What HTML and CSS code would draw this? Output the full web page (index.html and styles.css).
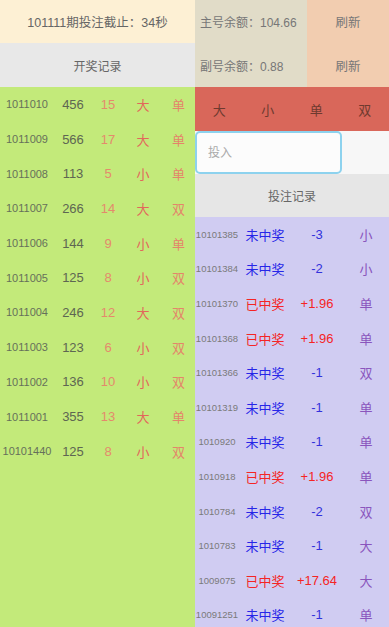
FILE: index.html
```html
<!DOCTYPE html>
<html lang="zh-CN">
<head>
  <meta charset="UTF-8">
  <meta name="viewport" content="width=device-width, initial-scale=1.0">
  <title>投注</title>
  <link rel="stylesheet" href="styles.css">
</head>
<body>
  <!-- Left: countdown + draw history -->
  <div class="left">
    <div class="countdown">101111期投注截止：34秒</div>
    <div class="bar">开奖记录</div>
    <div id="draw-list"></div>
  </div>

  <!-- Right: balances, betting, bet history -->
  <div class="right">
    <div class="balance-row">
      <div class="balance">主号余额：104.66</div>
      <div class="refresh">刷新</div>
    </div>
    <div class="balance-row">
      <div class="balance">副号余额：0.88</div>
      <div class="refresh">刷新</div>
    </div>
    <div class="bet-types">
      <span>大</span><span>小</span><span>单</span><span>双</span>
    </div>
    <div class="input-row">
      <input type="text" class="bet-input" placeholder="投入">
    </div>
    <div class="bar">投注记录</div>
    <div id="bet-list"></div>
  </div>

  <script>
    const draws = [
      ["1011010", "456", 15, "大", "单"],
      ["1011009", "566", 17, "大", "单"],
      ["1011008", "113", 5, "小", "单"],
      ["1011007", "266", 14, "大", "双"],
      ["1011006", "144", 9, "小", "单"],
      ["1011005", "125", 8, "小", "双"],
      ["1011004", "246", 12, "大", "双"],
      ["1011003", "123", 6, "小", "双"],
      ["1011002", "136", 10, "小", "双"],
      ["1011001", "355", 13, "大", "单"],
      ["10101440", "125", 8, "小", "双"]
    ];

    const bets = [
      ["10101385", false, "-3", "小"],
      ["10101384", false, "-2", "小"],
      ["10101370", true, "+1.96", "单"],
      ["10101368", true, "+1.96", "单"],
      ["10101366", false, "-1", "双"],
      ["10101319", false, "-1", "单"],
      ["1010920", false, "-1", "单"],
      ["1010918", true, "+1.96", "单"],
      ["1010784", false, "-2", "双"],
      ["1010783", false, "-1", "大"],
      ["1009075", true, "+17.64", "大"],
      ["10091251", false, "-1", "单"]
    ];

    // Draw history
    let drawList = document.getElementById("draw-list");
    draws.forEach(d => {
      let row = document.createElement("div");
      row.className = "draw-row";
      row.innerHTML = `
        <span class="d-period">${d[0]}</span>
        <span class="d-code">${d[1]}</span>
        <span class="d-sum">${d[2]}</span>
        <span class="d-size">${d[3]}</span>
        <span class="d-odd">${d[4]}</span>
      `;
      drawList.appendChild(row);
    });

    // Bet history
    let betList = document.getElementById("bet-list");
    bets.forEach(b => {
      let row = document.createElement("div");
      row.className = "bet-row" + (b[1] ? " win" : "");
      row.innerHTML = `
        <span class="b-period">${b[0]}</span>
        <span class="b-state">${b[1] ? "已中奖" : "未中奖"}</span>
        <span class="b-amount">${b[2]}</span>
        <span class="b-type">${b[3]}</span>
      `;
      betList.appendChild(row);
    });
  </script>
</body>
</html>
```

FILE: styles.css
```css
/* General */
body {
  margin: 0;
  height: 627px;
  overflow: hidden;
  display: flex;
  font-family: "Liberation Sans", "Noto Sans CJK SC", sans-serif;
  font-size: 12px;
  color: #666;
}

.left {
  width: 195px;
  background: #c3ea7a;
}

.right {
  width: 194px;
  background: #d0ccf2;
}

/* Headers */
.countdown {
  height: 43px;
  background: #fdf0d4;
  display: flex;
  align-items: center;
  justify-content: center;
  font-size: 12.5px;
}

.bar {
  height: 44px;
  background: #e8e8e8;
  display: flex;
  align-items: center;
  justify-content: center;
  color: #666;
}

.right .bar {
  height: 43px;
  background: #e6e6e6;
}

/* Draw history */
.draw-row {
  height: 34.7px;
  display: flex;
  align-items: center;
  text-align: center;
  font-size: 13px;
}

.d-period {
  width: 54px;
  font-size: 11px;
  color: #66705a;
}

.d-code {
  width: 38px;
  color: #5e6652;
}

.d-sum {
  width: 32px;
  color: #e48a6c;
}

.d-size {
  width: 38px;
  color: #e2675b;
}

.d-odd {
  width: 33px;
  color: #e4856a;
}

/* Balances */
.balance-row {
  height: 43.5px;
  display: flex;
}

.balance {
  width: 107px;
  padding-left: 5px;
  background: #e1dcc8;
  display: flex;
  align-items: center;
  color: #777;
}

.refresh {
  flex: 1;
  background: #f2cdb0;
  display: flex;
  align-items: center;
  justify-content: center;
  font-size: 12.5px;
  color: #777;
}

/* Bet types */
.bet-types {
  height: 44px;
  background: #d9675a;
  display: flex;
  align-items: center;
  font-size: 13px;
  color: #6e3a2f;
}

.bet-types span {
  flex: 1;
  text-align: center;
}

.input-row {
  height: 43px;
  background: #f7f7f7;
  display: flex;
}

.bet-input {
  width: 147px;
  margin: 0;
  padding: 0 0 0 11px;
  box-sizing: border-box;
  border: 2px solid #8dd2ee;
  border-radius: 5px;
  background: #fcfcfc;
  font-family: inherit;
  font-size: 12px;
  outline: none;
}

.bet-input::placeholder {
  color: #aaa;
}

/* Bet history */
.bet-row {
  height: 34.6px;
  display: flex;
  align-items: center;
  text-align: center;
  font-size: 13px;
}

.b-period {
  width: 44px;
  font-size: 9.5px;
  color: #7a7a7a;
}

.b-state {
  width: 52px;
  color: #2626e8;
}

.b-amount {
  width: 52px;
  color: #3232dc;
}

.b-type {
  width: 46px;
  color: #8a55bd;
}

.win .b-state,
.win .b-amount {
  color: #f52424;
}
```
